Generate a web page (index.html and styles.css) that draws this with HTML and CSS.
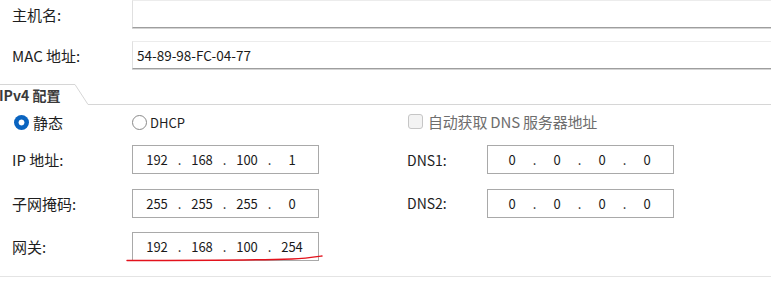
FILE: index.html
```html
<!DOCTYPE html>
<html lang="zh-CN">
<head>
<meta charset="utf-8">
<title>IPv4 配置</title>
<link rel="stylesheet" href="styles.css">
</head>
<body>
<div class="page">
  <div class="field-row">
    <div class="lbl">主机名:</div>
    <div class="textbox"></div>
  </div>
  <div class="field-row mac">
    <div class="lbl">MAC 地址:</div>
    <div class="textbox">54-89-98-FC-04-77</div>
  </div>

  <div class="tabbar">
    <div class="tab">
      <svg class="tab-outline" width="90" height="21" viewBox="0 0 90 21"><path d="M0 0.5 H75 L88 20.5 H90" fill="none" stroke="#d6d6d6" stroke-width="1"/></svg>
      <span class="tab-title">IPv4 配置</span>
    </div>
    <div class="tab-rest"></div>
  </div>

  <div class="ipv4-grid">
    <div class="opt opt-static"><span class="radio checked"></span><span>静态</span></div>
    <div class="opt"><span class="radio"></span><span class="latin">DHCP</span></div>
    <div class="opt opt-check"><span class="checkbox"></span><span>自动获取 DNS 服务器地址</span></div>

    <div class="lbl">IP 地址:</div>
    <div class="ipbox"><span class="seg">192</span><span class="dot">.</span><span class="seg">168</span><span class="dot">.</span><span class="seg">100</span><span class="dot">.</span><span class="seg">1</span></div>
    <div class="spacer"></div>
    <div class="lbl dns">DNS1:</div>
    <div class="ipbox"><span class="seg">0</span><span class="dot">.</span><span class="seg">0</span><span class="dot">.</span><span class="seg">0</span><span class="dot">.</span><span class="seg">0</span></div>

    <div class="lbl">子网掩码:</div>
    <div class="ipbox"><span class="seg">255</span><span class="dot">.</span><span class="seg">255</span><span class="dot">.</span><span class="seg">255</span><span class="dot">.</span><span class="seg">0</span></div>
    <div class="spacer"></div>
    <div class="lbl dns">DNS2:</div>
    <div class="ipbox"><span class="seg">0</span><span class="dot">.</span><span class="seg">0</span><span class="dot">.</span><span class="seg">0</span><span class="dot">.</span><span class="seg">0</span></div>

    <div class="lbl">网关:</div>
    <div class="ipbox"><span class="seg">192</span><span class="dot">.</span><span class="seg">168</span><span class="dot">.</span><span class="seg">100</span><span class="dot">.</span><span class="seg">254</span></div>
  </div>

  <div class="bottom-sep"></div>

  <svg class="annot" width="771" height="285" viewBox="0 0 771 285"><path d="M127 260.5 C 190 260.5, 260 260, 292 259 C 305 258.5, 315 257, 322 256" fill="none" stroke="#e3121c" stroke-width="1.4" stroke-linecap="round"/></svg>
</div>
</body>
</html>
```

FILE: styles.css
```css
* { box-sizing: border-box; }
html, body { margin: 0; padding: 0; background: #ffffff; }
body {
  width: 771px;
  height: 285px;
  overflow: hidden;
  font-family: "Noto Sans CJK SC", "Noto Sans", sans-serif;
  font-size: 15px;
  color: #1e1e1e;
}
.page {
  position: relative;
  width: 771px;
  height: 285px;
  overflow: hidden;
}
.field-row {
  display: grid;
  grid-template-columns: 132px 660px;
  align-items: center;
  height: 28px;
}
.field-row .lbl { padding-left: 12px; }
.field-row.mac { margin-top: 13px; }
.lbl {
  line-height: 1;
  white-space: nowrap;
}
.textbox {
  height: 28px;
  border-top: 1px solid #ececec;
  border-left: 1px solid #e0e0e0;
  border-bottom: 1px solid #9e9e9e;
  box-shadow: 0 1px 0 #d4d4d4;
  font-size: 13.5px;
  line-height: 26px;
  padding-left: 4px;
  color: #1a1a1a;
}

.tabbar {
  display: flex;
  margin-top: 15px;
  height: 21px;
}
.tab {
  position: relative;
  width: 90px;
  height: 21px;
  display: flex;
  align-items: center;
}
.tab-outline { position: absolute; left: 0; top: 0; }
.tab-title {
  font-size: 14px;
  font-weight: 700;
  color: #3a3a3a;
  margin-left: -1px;
  line-height: 1;
  padding-top: 1px;
}
.tab-rest {
  flex: 1;
  border-bottom: 1px solid #d6d6d6;
}

.ipv4-grid {
  display: grid;
  grid-template-columns: 120px 187px 88px 80px 187px;
  grid-template-rows: 16.5px 29px 29px 29px;
  row-gap: 14.5px;
  padding-left: 12px;
  padding-top: 9px;
  align-items: center;
}
.opt {
  display: flex;
  align-items: center;
  gap: 4px;
  line-height: 1;
  white-space: nowrap;
}
.opt-static { padding-left: 2px; }
.latin { font-size: 13px; margin-left: -1px; }
.opt-check {
  grid-column: 4 / 6;
  padding-left: 1px;
  gap: 5px;
  color: #6e6e6e;
  margin-top: -2px;
  letter-spacing: -0.2px;
}
.radio {
  width: 15px;
  height: 15px;
  border-radius: 50%;
  border: 1px solid #8a8a8a;
  background: #ffffff;
  flex: none;
}
.radio.checked {
  border: none;
  background: radial-gradient(circle, #ffffff 0 2.6px, #0a64c0 3.3px);
}
.checkbox {
  width: 15px;
  height: 15px;
  border: 1px solid #c6c6c6;
  border-radius: 3px;
  background: #f3f3f3;
  flex: none;
}
.ipbox {
  height: 29px;
  border: 1px solid #a9a9a9;
  display: flex;
  align-items: center;
  padding-left: 4px;
  font-size: 13px;
  color: #1a1a1a;
}
.seg {
  width: 40px;
  text-align: center;
}
.dot {
  width: 5px;
  text-align: center;
}
.dns { font-size: 14px; }

.bottom-sep {
  margin-top: 15px;
  border-top: 1px solid #e4e4e4;
}
.annot {
  position: absolute;
  left: 0;
  top: 0;
  pointer-events: none;
}
```
